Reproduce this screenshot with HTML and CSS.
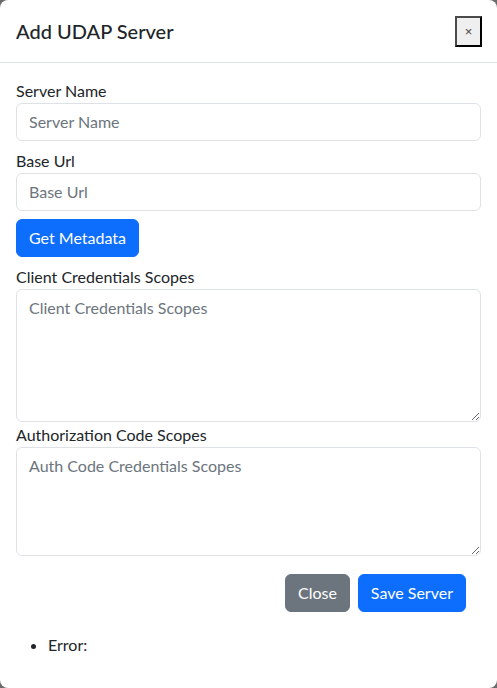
FILE: index.html
```html
<!DOCTYPE html>
<html lang="en">
<head>
<meta charset="utf-8">
<title>Add UDAP Server</title>
<link rel="stylesheet" href="styles.css">
</head>
<body>
<div class="modal">
  <div class="modal-header">
    <h5 class="modal-title">Add UDAP Server</h5>
    <button class="close-btn" type="button">×</button>
  </div>
  <div class="modal-body">
    <label class="form-label">Server Name</label>
    <input class="form-control" type="text" placeholder="Server Name">
    <label class="form-label">Base Url</label>
    <input class="form-control" type="text" placeholder="Base Url">
    <button class="btn btn-primary btn-meta" type="button">Get Metadata</button>
    <label class="form-label">Client Credentials Scopes</label>
    <textarea class="form-control ta-client" placeholder="Client Credentials Scopes"></textarea>
    <label class="form-label">Authorization Code Scopes</label>
    <textarea class="form-control ta-auth" placeholder="Auth Code Credentials Scopes"></textarea>
    <div class="modal-footer">
      <button class="btn btn-secondary" type="button">Close</button>
      <button class="btn btn-primary" type="button">Save Server</button>
    </div>
    <ul class="errors">
      <li>Error:</li>
    </ul>
  </div>
</div>
</body>
</html>
```
FILE: styles.css
```css
html, body {
  margin: 0;
  padding: 0;
}
body {
  background: #6b6b6b;
  font-family: Lato, "Noto Sans", sans-serif;
  color: #212529;
  font-size: 16px;
  line-height: 24px;
}
.modal {
  background: #fff;
  min-height: 688px;
  border-radius: 8px;
  box-sizing: border-box;
}
.modal-header {
  display: flex;
  align-items: center;
  justify-content: space-between;
  padding: 16px 15px 16px 16px;
  border-bottom: 1px solid #dee2e6;
}
.modal-title {
  margin: 0;
  font-size: 20px;
  font-weight: 500;
  line-height: 30px;
}
.close-btn {
  width: 27px;
  height: 31px;
  margin: -1px 0 -1px 0;
  padding: 0;
  background: #efefef;
  border-style: solid;
  border-width: 2px;
  border-color: #4a4a4a #000 #000 #4a4a4a;
  font-size: 13px;
  color: #444;
  font-family: Arial, "Liberation Sans", sans-serif;
}
.modal-body {
  padding: 16px 16px 0 16px;
}
.form-label {
  display: block;
  line-height: 24px;
}
.form-control {
  display: block;
  width: 100%;
  box-sizing: border-box;
  padding: 6px 12px;
  font: inherit;
  font-size: 16px;
  line-height: 24px;
  color: #212529;
  border: 1px solid #dee2e6;
  border-radius: 6px;
  margin: 0 0 8px 0;
  background: #fff;
}
.form-control::placeholder {
  color: #6c757d;
}
.ta-client {
  height: 133px;
  margin-bottom: 1px;
}
.ta-auth {
  height: 109px;
  margin-bottom: 0;
}
.btn {
  font: inherit;
  font-size: 16px;
  line-height: 24px;
  padding: 6px 12px;
  border: 1px solid transparent;
  border-radius: 6px;
  color: #fff;
}
.btn-primary {
  background: #0d6efd;
  border-color: #0d6efd;
}
.btn-secondary {
  background: #6c757d;
  border-color: #6c757d;
}
.btn-meta {
  display: block;
  margin-bottom: 8px;
}
.modal-footer {
  display: flex;
  justify-content: flex-end;
  gap: 8px;
  padding: 18px 15px 0 0;
}
.errors {
  margin: 21px 0 0 0;
  padding-left: 32px;
}
```
